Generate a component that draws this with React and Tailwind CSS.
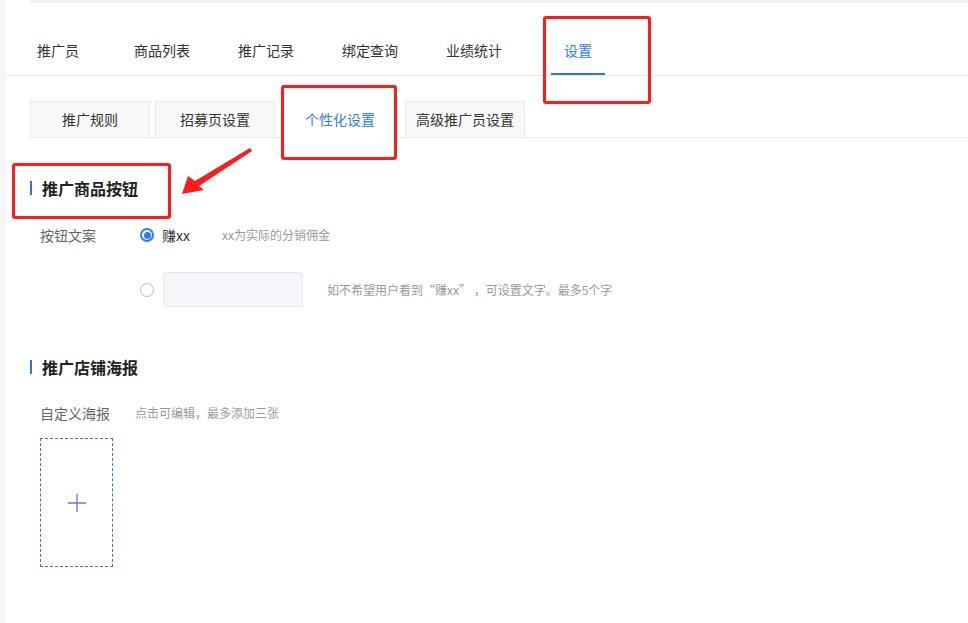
import React from "react";

const font = { fontFamily: '"Noto Sans CJK SC", "Noto Sans", sans-serif' };

function MainTab({ label, ml, active }) {
  return (
    <div className={`relative h-full flex items-center pt-[22px] ${ml}`}>
      {active ? (
        <div className="relative h-full flex items-center px-[13px]">
          <span className="text-[14px] leading-[20px] text-[#2f7bf5]">{label}</span>
          <div className="absolute left-0 right-0 bottom-0 h-[2px] bg-[#2e74e6]" />
        </div>
      ) : (
        <span className="text-[14px] leading-[20px] text-[#333]">{label}</span>
      )}
    </div>
  );
}

function SubTab({ label, active }) {
  if (active) {
    return (
      <div className="w-[120px] h-[37px] -mb-px bg-white flex items-center justify-center text-[14px] text-[#2f7bf5]">
        {label}
      </div>
    );
  }
  return (
    <div className="w-[120px] h-[36px] border-t border-x border-[#ebebeb] bg-[#f8f8f8] flex items-center justify-center text-[14px] text-[#333]">
      {label}
    </div>
  );
}

function SectionTitle({ children }) {
  return (
    <div className="flex items-center h-[24px]">
      <div className="w-[2px] h-[14px] bg-[#2e74e6]" />
      <span className="ml-[10px] text-[16px] leading-[24px] font-bold text-[#222]">{children}</span>
    </div>
  );
}

export default function App() {
  return (
    <div className="relative w-[968px] h-[623px] overflow-hidden flex bg-white" style={font}>
      <div className="w-[6px] h-full bg-[#f3f5f9]" />
      <div className="flex-1 flex flex-col">
        <div className="ml-[24px] h-[3px] bg-[#eff1f5] rounded-bl-[3px] border-b border-[#e8eaef]" />
        <div className="flex h-[73px] border-b border-[#ebebeb]">
          <MainTab label="推广员" ml="ml-[31px]" />
          <MainTab label="商品列表" ml="ml-[55px]" />
          <MainTab label="推广记录" ml="ml-[48px]" />
          <MainTab label="绑定查询" ml="ml-[48px]" />
          <MainTab label="业绩统计" ml="ml-[48px]" />
          <MainTab label="设置" ml="ml-[49px]" active />
        </div>

        <div className="ml-[24px] mt-[25px] flex items-end gap-[5px] border-b border-[#ebebeb]">
          <SubTab label="推广规则" />
          <SubTab label="招募页设置" />
          <SubTab label="个性化设置" active />
          <SubTab label="高级推广员设置" />
        </div>

        <div className="pl-[24px] mt-[38px]">
          <SectionTitle>推广商品按钮</SectionTitle>

          <div className="mt-[25px] flex items-center h-[20px] pl-[10px]">
            <span className="w-[100px] text-[14px] text-[#666]">按钮文案</span>
            <div className="w-[14px] h-[14px] rounded-full border-[2px] border-[#2f78f2] flex items-center justify-center">
              <div className="w-[7px] h-[7px] rounded-full bg-[#2f78f2]" />
            </div>
            <span className="ml-[8px] text-[14px] text-[#333]">赚xx</span>
            <span className="ml-[32px] text-[12px] text-[#999]">xx为实际的分销佣金</span>
          </div>

          <div className="mt-[27px] flex items-center h-[35px] pl-[110px]">
            <div className="w-[14px] h-[14px] rounded-full border border-[#b8bcc4] bg-white" />
            <div className="ml-[9px] w-[140px] h-[35px] rounded-[3px] border border-[#e4e7ed] bg-[#f5f7fa]" />
            <span className="ml-[24px] text-[12px] text-[#999] whitespace-pre">如不希望用户看到“赚xx” ，可设置文字。最多5个字</span>
          </div>

          <div className="mt-[48px]">
            <SectionTitle>推广店铺海报</SectionTitle>
          </div>

          <div className="mt-[24px] flex items-center h-[20px] pl-[10px]">
            <span className="text-[14px] text-[#666]">自定义海报</span>
            <span className="ml-[25px] text-[12px] text-[#999]">点击可编辑，最多添加三张</span>
          </div>

          <div className="ml-[10px] mt-[15px] w-[73px] h-[129px] border border-dashed border-[#2e74e6] flex items-center justify-center">
            <svg width="20" height="20" viewBox="0 0 20 20">
              <path d="M10 1V19M1 10H19" stroke="#6f6cf0" strokeWidth="1.3" fill="none" />
            </svg>
          </div>
        </div>
      </div>

      <div className="absolute left-[543px] top-[16px] w-[108px] h-[88px] border-[3px] border-[#fb1c1c] rounded-[3px]" />
      <div className="absolute left-[281px] top-[85px] w-[116px] h-[75px] border-[3px] border-[#fb1c1c] rounded-[3px]" />
      <div className="absolute left-[12px] top-[163px] w-[159px] h-[56px] border-[3px] border-[#fb1c1c] rounded-[3px]" />
      <svg className="absolute left-0 top-0" width="968" height="623" viewBox="0 0 968 623" style={{ pointerEvents: "none" }}>
        <polygon
          points="182,194 188,176 195,181 250,148 252,151 199,186 204,190"
          fill="#fb1c1c"
        />
      </svg>
    </div>
  );
}
